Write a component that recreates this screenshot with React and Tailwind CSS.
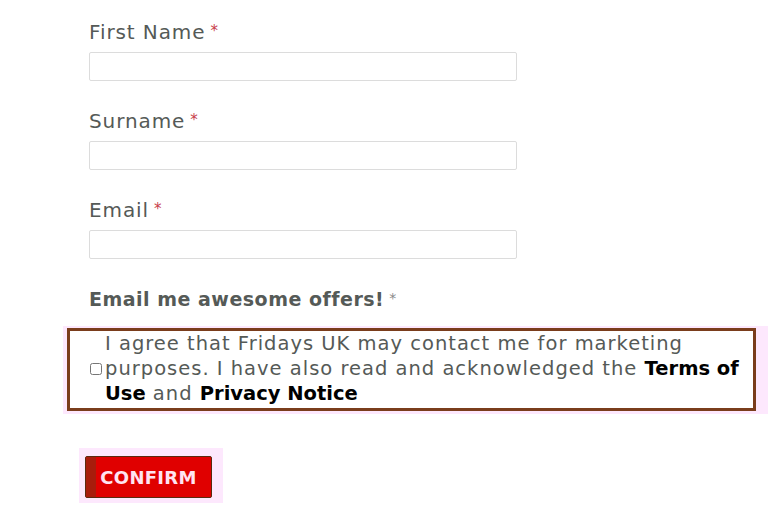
import React, { useState } from "react";

const font = { fontFamily: '"DejaVu Sans", "Noto Sans", sans-serif' };

function Field({ label, value, onChange, first }) {
    return (
        <div className={first ? "" : "mt-[26px]"}>
            <label className="flex items-center h-[28px] text-[20px] text-[#555a57] tracking-[0.9px]">
                {label}
                <span className="ml-[5px] text-[#c8404a] text-[15px] -mt-[2px]">*</span>
            </label>
            <input
                type="text"
                value={value}
                onChange={(e) => onChange(e.target.value)}
                className="mt-[6px] block w-[428px] h-[29px] border border-[#dcdcdc] rounded-[2px] bg-white px-2 outline-none"
            />
        </div>
    );
}

export default function App() {
    const [firstName, setFirstName] = useState("");
    const [surname, setSurname] = useState("");
    const [email, setEmail] = useState("");
    const [agree, setAgree] = useState(false);

    return (
        <div className="w-[779px] h-[523px] bg-white overflow-hidden" style={font}>
            <div className="pl-[89px] pt-[18px]">
                <Field label="First Name" value={firstName} onChange={setFirstName} first />
                <Field label="Surname" value={surname} onChange={setSurname} />
                <Field label="Email" value={email} onChange={setEmail} />

                <div className="mt-[26px] flex items-center h-[28px] text-[19px] font-bold text-[#555a57] tracking-[0.5px]">
                    Email me awesome offers!
                    <span className="ml-[5px] font-normal text-[#888] text-[14px] -mt-[2px]">*</span>
                </div>

                <div className="mt-[13px] -ml-[26px] w-[705px] bg-[#fde8fd] pl-[4px] pr-[12px] pt-[2px] pb-[3px]">
                    <div className="flex items-center border-[3px] border-[#7a3d1c] bg-white pb-[2px]">
                        <input
                            type="checkbox"
                            checked={agree}
                            onChange={(e) => setAgree(e.target.checked)}
                            className="ml-[20px] mr-[3px] w-[12px] h-[12px] shrink-0"
                        />
                        <p className="text-[19.5px] leading-[25px] text-[#555a57] tracking-[1px] whitespace-nowrap">
                            I agree that Fridays UK may contact me for marketing
                            <br />
                            purposes. I have also read and acknowledged the{" "}
                            <span className="font-bold text-black tracking-normal">Terms of</span>
                            <br />
                            <span className="font-bold text-black tracking-normal">Use</span> and{" "}
                            <span className="font-bold text-black tracking-normal">Privacy Notice</span>
                        </p>
                    </div>
                </div>

                <div className="mt-[34px] -ml-[10px] w-[144px] bg-[#fde8fd] pl-[6px] pt-[8px] pb-[5px]">
                    <button className="flex h-[42px] w-[127px] border border-[#5a2a10] rounded-[2px] overflow-hidden bg-[#e00000]">
                        <span className="w-[10px] h-full bg-[#a81c0c]" />
                        <span className="flex-1 flex items-center justify-center pr-[10px] text-[18px] font-bold text-[#ffe4f2] tracking-[0.3px]">
                            CONFIRM
                        </span>
                    </button>
                </div>
            </div>
        </div>
    );
}
